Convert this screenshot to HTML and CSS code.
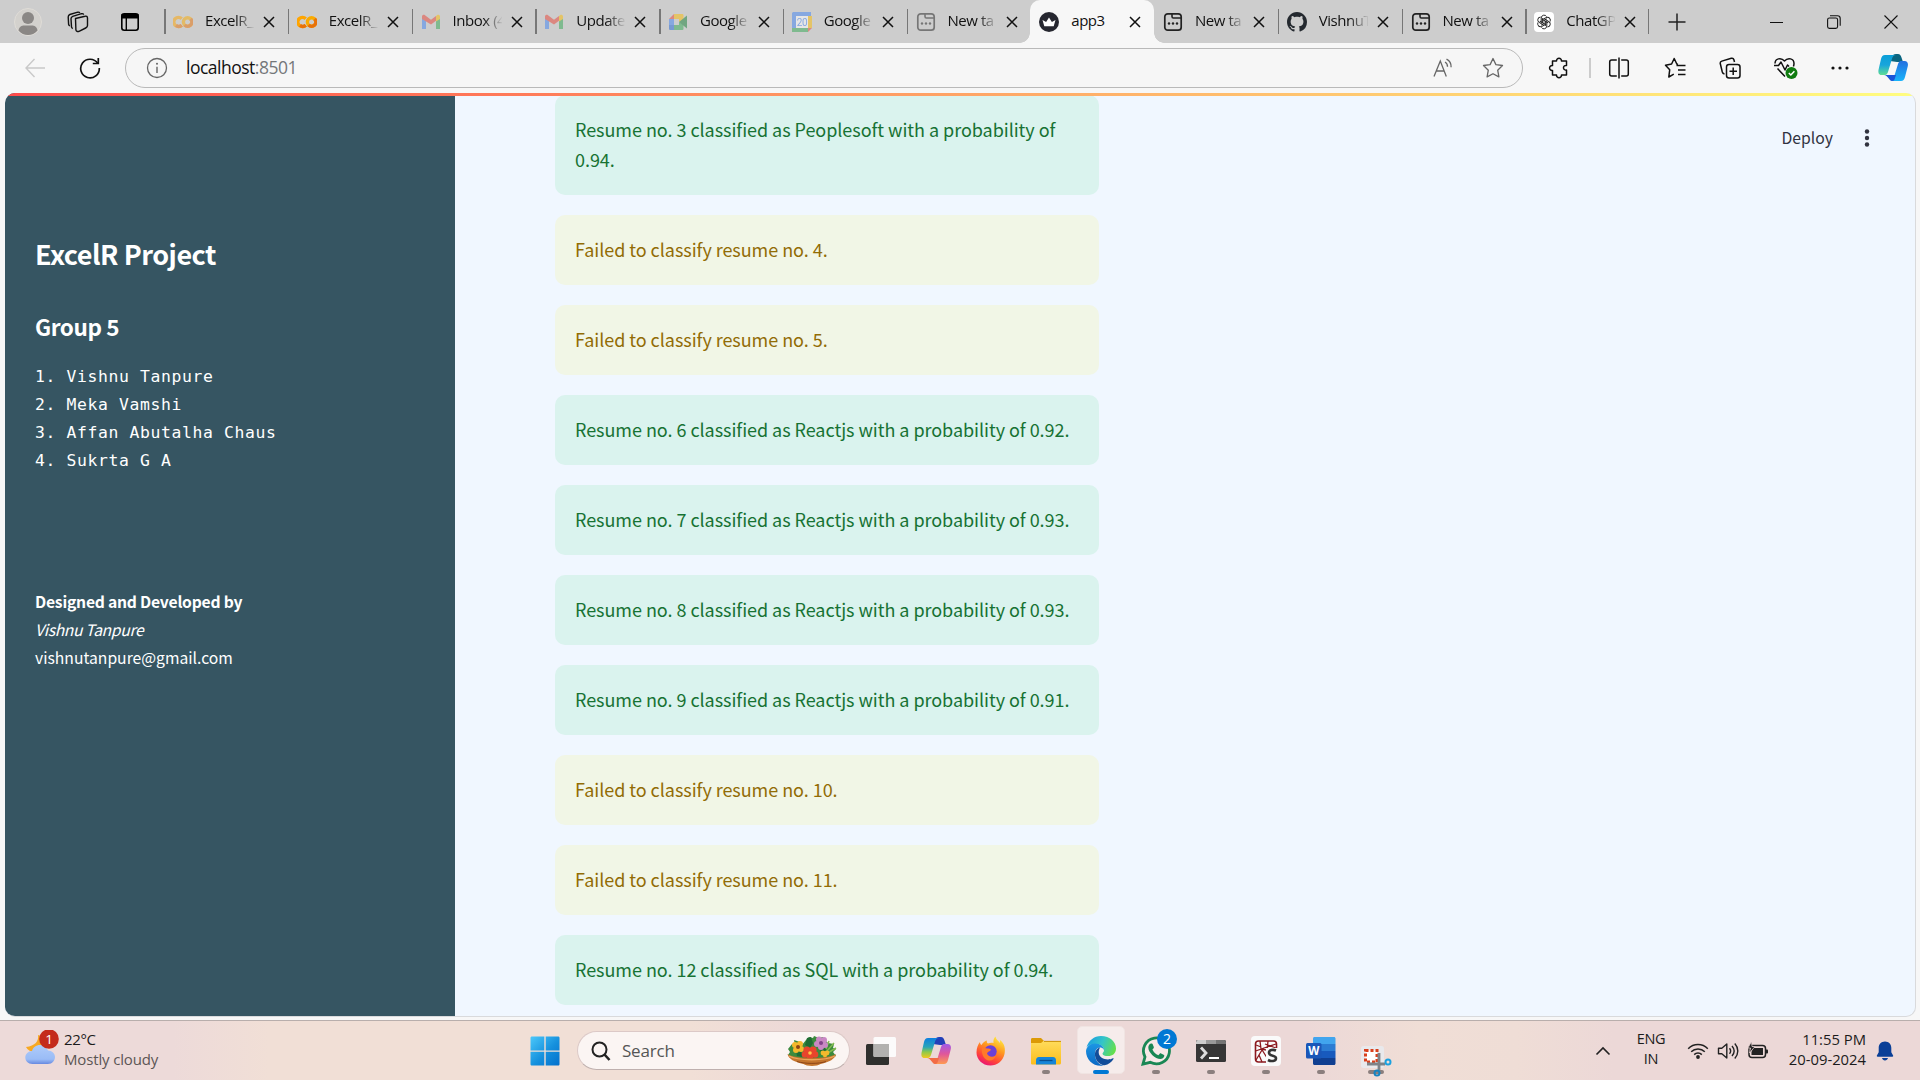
FILE: index.html
```html
<!DOCTYPE html>
<html lang="en">
<head>
<meta charset="utf-8">
<title>app3</title>
<link rel="stylesheet" href="styles.css">
</head>
<body>
<svg class="defs" aria-hidden="true">
  <defs>
    <linearGradient id="gWin" x1="0" y1="0" x2="1" y2="1"><stop offset="0" stop-color="#4cc8fa"/><stop offset=".55" stop-color="#1590dd"/><stop offset="1" stop-color="#0470cc"/></linearGradient>
    <linearGradient id="gCoA" x1="0" y1="0" x2="0" y2="1"><stop offset="0" stop-color="#0a9fd8"/><stop offset=".5" stop-color="#18a5dc"/><stop offset="1" stop-color="#5fdc94"/></linearGradient>
    <linearGradient id="gCoB" x1="0" y1="0" x2="0" y2="1"><stop offset="0" stop-color="#2470e0"/><stop offset="1" stop-color="#18b4fa"/></linearGradient>
    <linearGradient id="gCoC" x1="0" y1="0" x2="0" y2="1"><stop offset="0" stop-color="#0d7fe0"/><stop offset=".45" stop-color="#2aa5b8"/><stop offset=".7" stop-color="#8ec94a"/><stop offset="1" stop-color="#f2c81e"/></linearGradient>
    <linearGradient id="gCoD" x1="0" y1="0" x2="0" y2="1"><stop offset="0" stop-color="#a05be8"/><stop offset=".5" stop-color="#e0569a"/><stop offset="1" stop-color="#ff9a50"/></linearGradient>
    <linearGradient id="gFox" x1=".8" y1="0" x2=".3" y2="1"><stop offset="0" stop-color="#fff044"/><stop offset=".4" stop-color="#ff9a1f"/><stop offset=".75" stop-color="#ff4438"/><stop offset="1" stop-color="#e91277"/></linearGradient>
    <linearGradient id="gFold" x1="0" y1="0" x2="0" y2="1"><stop offset="0" stop-color="#ffdc5c"/><stop offset="1" stop-color="#fbbd1c"/></linearGradient>
    <linearGradient id="gEdgeT" x1="0" y1=".3" x2="1" y2=".6"><stop offset="0" stop-color="#1b9de2"/><stop offset=".5" stop-color="#34c5c8"/><stop offset="1" stop-color="#66e04a"/></linearGradient>
    <linearGradient id="gEdgeB" x1="0" y1="0" x2="0" y2="1"><stop offset="0" stop-color="#1c96e4"/><stop offset="1" stop-color="#0b68c4"/></linearGradient>
    <linearGradient id="gCloud" x1="0" y1="0" x2="0" y2="1"><stop offset="0" stop-color="#aecbfa"/><stop offset=".75" stop-color="#9abcf6"/><stop offset="1" stop-color="#6789e0"/></linearGradient>
    <symbol id="close" viewBox="0 0 12 12"><path d="M1 1l10 10M11 1L1 11" fill="none" stroke="#111" stroke-width="1.5"/></symbol>
    <symbol id="colab" viewBox="0 0 20 20"><g fill="none" stroke-width="3.4"><path d="M8.7 6.8A4.6 4.6 0 1 0 8.7 13.2" stroke="#ffa500"/><circle cx="14.6" cy="10" r="4.2" stroke="#f9ab00"/><path d="M3 13.4A4.6 4.6 0 0 0 8.8 13.2M11.6 13A4.2 4.2 0 0 0 17.6 7" stroke="#e8710a"/></g></symbol>
    <symbol id="gmail" viewBox="0 0 20 20"><path d="M1 4.5V17h4V8.5z" fill="#4285f4"/><path d="M19 4.5V17h-4V8.5z" fill="#34a853"/><path d="M1 7V4.5C1 3 2.8 2.300 4 3.200L10 7.700l5-3.800V8.700L10 12.500z" fill="#ea4335"/><path d="M15 4l1-.8c1.200-.9 3-.2 3 1.300V7l-4 2.500z" fill="#fbbc04"/></symbol>
    <symbol id="meet" viewBox="0 0 20 20"><path d="M1 7l5-5v5z" fill="#ea4335"/><path d="M6 2h8c1 0 1.500.5 1.500 1.500V9L11 10V7H6z" fill="#fbbc04"/><path d="M1 7h5v6H1z" fill="#4285f4"/><path d="M1 13h5v5H2.500C1.500 18 1 17.500 1 16.500z" fill="#2468d8"/><path d="M6 13h5v-3l4.500 2v4.500c0 1-.5 1.500-1.500 1.500H6z" fill="#34a853"/><path d="M11 10l8-6.500v13z" fill="#188038"/></symbol>
    <symbol id="calendar" viewBox="0 0 20 20"><path d="M1 0h18v5H0V1z" fill="#4285f4"/><path d="M0 4h4v12H0z" fill="#4285f4"/><path d="M16 4h4v12h-4z" fill="#fbbc04"/><path d="M0 16h16v4H0z" fill="#34a853"/><path d="M16 16h4l-4 4z" fill="#ea4335"/><path d="M4 4h12v12H4z" fill="#fff"/><text x="10" y="13.800" text-anchor="middle" font-family="Roboto, sans-serif" font-size="10" fill="#4285f4">20</text></symbol>
    <symbol id="newtab" viewBox="0 0 20 20"><rect x="1.800" y="1.800" width="16.400" height="16.400" rx="3" fill="none" stroke="#222" stroke-width="1.700"/><path d="M9 2v2.600C9 5.400 9.500 6 10.300 6H18" fill="none" stroke="#222" stroke-width="1.600"/><g fill="#222"><circle cx="6" cy="11.500" r="1.200"/><circle cx="10" cy="11.500" r="1.200"/><circle cx="14" cy="11.500" r="1.200"/></g></symbol>
    <symbol id="crown" viewBox="0 0 20 20"><circle cx="10" cy="10" r="10" fill="#262730"/><path d="M3.500 8l3.600 2L10 5.500l2.900 4.500L16.500 8l-1.800 6.200H5.300z" fill="#fff"/></symbol>
    <symbol id="github" viewBox="0 0 16 16"><path fill="#24292f" d="M8 0C3.580 0 0 3.580 0 8c0 3.540 2.290 6.530 5.470 7.590.4.070.55-.17.55-.38 0-.19-.01-.82-.01-1.490-2.010.37-2.530-.49-2.690-.94-.09-.23-.48-.94-.82-1.130-.28-.15-.68-.52-.01-.53.63-.01 1.080.58 1.230.82.72 1.210 1.870.87 2.330.66.07-.52.28-.87.51-1.070-1.780-.2-3.640-.89-3.640-3.950 0-.87.31-1.590.82-2.150-.08-.2-.36-1.020.08-2.120 0 0 .67-.21 2.200.82.64-.18 1.320-.27 2-.27s1.360.09 2 .27c1.530-1.040 2.200-.82 2.200-.82.44 1.100.16 1.920.08 2.120.51.56.82 1.270.82 2.150 0 3.070-1.870 3.750-3.650 3.950.29.25.54.73.54 1.480 0 1.070-.01 1.930-.01 2.200 0 .21.15.46.55.38A8.010 8.010 0 0 0 16 8c0-4.420-3.580-8-8-8z"/></symbol>
    <symbol id="gpt" viewBox="0 0 20 20"><rect width="20" height="20" rx="4" fill="#fff"/><g fill="none" stroke="#222" stroke-width=".95"><path id="petal" d="M7.200 10.800V6A2.900 2.900 0 0 1 12.600 4.600M8.700 9.200l4.200-2.400"/><use href="#petal" transform="rotate(60 10 10)"/><use href="#petal" transform="rotate(120 10 10)"/><use href="#petal" transform="rotate(180 10 10)"/><use href="#petal" transform="rotate(240 10 10)"/><use href="#petal" transform="rotate(300 10 10)"/></g></symbol>
  </defs>
</svg>

<header class="tabstrip">
  <div class="strip-tools">
    <svg class="avatar" width="28" height="28" viewBox="0 0 28 28"><circle cx="14" cy="14" r="13.500" fill="#d3d1cd" stroke="#dfdcd7"/><circle cx="14" cy="10" r="6" fill="#8a8785"/><path d="M4.500 22.500C5 18.500 8 17.500 10 17.500h8c2 0 5 1 5.500 5C21 25.500 17.500 27 14 27s-7-1.500-9.500-4.500z" fill="#8a8785"/></svg>
    <svg class="spaces" width="22" height="22" viewBox="0 0 22 22" fill="none" stroke="#111" stroke-width="1.400" stroke-linejoin="round"><path d="M8.500 7.500l9.500-2.300c1.500-.4 2.500.3 2.500 1.800v7.500c0 1.200-.7 2-1.800 2.500L12 20.300c-1.500.6-2.800 0-3.100-1.500z" /><path d="M5.800 17.500c-.8-.2-1.200-.8-1.300-1.500L4 7.700c0-1.200.6-2 1.700-2.400l8.800-2.600c1-.2 1.800.1 2.200.9"/><path d="M2.900 14.800c-.8-.2-1.200-.7-1.300-1.500L1.200 5.900c0-1.200.5-2 1.600-2.400l8-2.300c.9-.2 1.600 0 2 .8"/></svg>
    <svg class="vtabs" width="20" height="20" viewBox="0 0 20 20"><rect x="1.800" y="1.800" width="16.400" height="16.400" rx="2.500" fill="none" stroke="#000" stroke-width="1.600"/><path d="M1.500 2h17v4.500h-17z" fill="#000"/><path d="M6.300 6v12" stroke="#000" stroke-width="1.400"/></svg>
  </div>
  <nav class="tabs">
    <div class="tab asleep"><svg class="fav"><use href="#colab"/></svg><span>ExcelR_</span><svg class="x"><use href="#close"/></svg></div>
    <div class="tab"><svg class="fav"><use href="#colab"/></svg><span>ExcelR_</span><svg class="x"><use href="#close"/></svg></div>
    <div class="tab asleep"><svg class="fav"><use href="#gmail"/></svg><span>Inbox (4</span><svg class="x"><use href="#close"/></svg></div>
    <div class="tab asleep"><svg class="fav"><use href="#gmail"/></svg><span>Update</span><svg class="x"><use href="#close"/></svg></div>
    <div class="tab asleep"><svg class="fav"><use href="#meet"/></svg><span>Google</span><svg class="x"><use href="#close"/></svg></div>
    <div class="tab asleep"><svg class="fav"><use href="#calendar"/></svg><span>Google</span><svg class="x"><use href="#close"/></svg></div>
    <div class="tab asleep"><svg class="fav"><use href="#newtab"/></svg><span>New ta</span><svg class="x"><use href="#close"/></svg></div>
    <div class="tab active"><svg class="fav"><use href="#crown"/></svg><span>app3</span><svg class="x"><use href="#close"/></svg></div>
    <div class="tab noline"><svg class="fav"><use href="#newtab"/></svg><span>New ta</span><svg class="x"><use href="#close"/></svg></div>
    <div class="tab"><svg class="fav"><use href="#github"/></svg><span>VishnuT</span><svg class="x"><use href="#close"/></svg></div>
    <div class="tab"><svg class="fav"><use href="#newtab"/></svg><span>New ta</span><svg class="x"><use href="#close"/></svg></div>
    <div class="tab last"><svg class="fav"><use href="#gpt"/></svg><span>ChatGP</span><svg class="x"><use href="#close"/></svg></div>
  </nav>
  <svg class="plus" width="18" height="18" viewBox="0 0 18 18"><path d="M9 .5v17M.5 9h17" stroke="#222" stroke-width="1.500"/></svg>
  <div class="winctl">
    <svg width="14" height="14" viewBox="0 0 14 14"><path d="M0 7.500h13" stroke="#111"/></svg>
    <svg width="14" height="14" viewBox="0 0 14 14" fill="none" stroke="#111" stroke-width="1.100"><rect x=".6" y="3" width="10" height="10.400" rx="1.800"/><path d="M3 .8h7.500c1.700 0 2.700 1 2.700 2.700v7.200"/></svg>
    <svg width="14" height="14" viewBox="0 0 14 14"><path d="M.5.500l13 13M13.500.500l-13 13" stroke="#111" stroke-width="1.100"/></svg>
  </div>
</header>

<div class="toolbar">
  <svg class="back" width="20" height="20" viewBox="0 0 20 20" fill="none" stroke="#c9c9c9" stroke-width="1.400"><path d="M20 10H1M9.500 1L1 10l8.500 9"/></svg>
  <svg class="reload" width="22" height="22" viewBox="0 0 22 22" fill="none" stroke="#111" stroke-width="1.700"><path d="M18.700 6.300A9.300 9.300 0 1 0 20.300 11"/><path d="M19.300 1v5.500h-5.500"/></svg>
  <div class="address">
    <svg width="22" height="22" viewBox="0 0 22 22"><circle cx="11" cy="11" r="9.500" fill="none" stroke="#666" stroke-width="1.300"/><path d="M11 9.800V16" stroke="#666" stroke-width="1.400"/><circle cx="11" cy="6.800" r="1" fill="#666"/></svg>
    <p>localhost<em>:8501</em></p>
    <svg class="read" width="20" height="20" viewBox="0 0 20 20" fill="none" stroke="#666" stroke-width="1.300"><path d="M1 18.500L7.300 3l6 15.500M3.200 13h8.200M12 4c1.800 1 2.600 2.600 2.500 4.800M13.500 1.200c3.300 1.700 4.800 4.500 4.600 8"/></svg>
    <svg class="star" width="22" height="22" viewBox="0 0 22 22" fill="none" stroke="#666" stroke-width="1.300" stroke-linejoin="round"><path d="M11 1.500l2.900 6.100 6.600.9-4.800 4.700 1.200 6.700-5.900-3.200-5.900 3.200 1.200-6.700L1.500 8.500l6.600-.9z"/></svg>
  </div>
  <div class="actions">
    <svg width="22" height="22" viewBox="0 0 22 22" fill="none" stroke="#111" stroke-width="1.500" stroke-linejoin="round"><path d="M4.500 4h4c-.2-3.700 5.200-3.700 5 0h5v4.500c-4-.8-4 5.200 0 4.600V18h-5c.2 3.700-5.200 3.700-5 0h-4v-4.600C.6 13.800.6 8.200 4.500 8.600z"/></svg>
    <i></i>
    <svg class="a-split" width="22" height="22" viewBox="0 0 22 22" fill="none" stroke="#111" stroke-width="1.500"><path d="M8.800 3H3.700C2.500 3 1.700 3.800 1.700 5v12c0 1.200.8 2 2 2h5.100M13.200 3h5.100c1.200 0 2 .8 2 2v12c0 1.200-.8 2-2 2h-5.100M11 .5v21"/></svg>
    <svg class="a-fav" width="22" height="22" viewBox="0 0 22 22" fill="none" stroke="#111" stroke-width="1.500" stroke-linejoin="round"><path d="M14 7.300L12.800 7 10.200 1.500 7.600 7 1.500 8.200l4.200 4.600L4.800 20l5-2.800M12.500 8.500H21.500M14 13h7.500M14 17.500h7.500"/></svg>
    <svg class="a-coll" width="22" height="22" viewBox="0 0 22 22" fill="none" stroke="#111" stroke-width="1.500" stroke-linejoin="round"><rect x="7.500" y="7.500" width="13.500" height="13.500" rx="2.500"/><path d="M14.200 10.500v7.500M10.500 14.200H18M5.500 17c-1.200-.2-1.900-.9-2.200-2L1.300 6.800c-.3-1.300.2-2.300 1.500-2.700L12.300 1.300c1.300-.3 2.300.3 2.600 1.500l.6 2.200"/></svg>
    <svg class="a-heart" width="26" height="24" viewBox="0 0 26 24" fill="none" stroke="#111" stroke-width="1.500" stroke-linejoin="round"><path d="M12 20.500L4.500 12.500M2 7.500C2 2.500 8 1 11.500 5 15 1 21 2.500 21 7.500c0 1-.2 2-.6 3"/><path d="M1 9.500h4.500l2.500-3.500 4 8 2.500-5 1.500 1.500"/><circle cx="18.500" cy="17" r="6" fill="#107c10" stroke="none"/><path d="M15.800 17l2 2 3.600-3.700" stroke="#fff"/></svg>
    <svg class="a-dots" width="22" height="22" viewBox="0 0 22 22"><g fill="#111"><circle cx="4" cy="11" r="1.600"/><circle cx="11" cy="11" r="1.600"/><circle cx="18" cy="11" r="1.600"/></g></svg>
    <svg class="a-copilot" width="30" height="28" viewBox="0 0 30 28"><path d="M12 7l2-4c.7-1.800 1.700-3 4-3h2c2 0 2.800 1.400 3.400 3.200L25 8h-6z" fill="#0b6580"/><path d="M7 1h11c-2 0-3 1-3.800 3L10 18c-.8 2.600-2 3-4 3H3.500C.6 21 0 18.500.6 15.500L3 5c.7-2.600 1.700-4 4-4z" fill="url(#gCoA)"/><path d="M24 7h2.500c3 0 4 2.500 3.200 5.500L27 23c-.7 2.600-1.800 4-4 4H12c2 0 3-1 3.700-3L20 10c.8-2.500 2-3 4-3z" fill="url(#gCoB)"/><path d="M6 21c4 0 5 6 8 6 2 0 2.500-1 3-3l1-3z" fill="#1954d8"/></svg>
  </div>
</div>

<main class="frame">
  <div class="loading"></div>
  <aside class="sidebar">
    <h2>ExcelR Project</h2>
    <h3>Group 5</h3>
    <pre>1. Vishnu Tanpure
2. Meka Vamshi
3. Affan Abutalha Chaus
4. Sukrta G A</pre>
    <p class="credit"><strong>Designed and Developed by</strong><br><em>Vishnu Tanpure</em><br>vishnutanpure@gmail.com</p>
  </aside>
  <section class="results">
    <div class="alert ok">Resume no. 3 classified as Peoplesoft with a probability of<br>0.94.</div>
    <div class="alert warn">Failed to classify resume no. 4.</div>
    <div class="alert warn">Failed to classify resume no. 5.</div>
    <div class="alert ok">Resume no. 6 classified as Reactjs with a probability of 0.92.</div>
    <div class="alert ok">Resume no. 7 classified as Reactjs with a probability of 0.93.</div>
    <div class="alert ok">Resume no. 8 classified as Reactjs with a probability of 0.93.</div>
    <div class="alert ok">Resume no. 9 classified as Reactjs with a probability of 0.91.</div>
    <div class="alert warn">Failed to classify resume no. 10.</div>
    <div class="alert warn">Failed to classify resume no. 11.</div>
    <div class="alert ok">Resume no. 12 classified as SQL with a probability of 0.94.</div>
  </section>
  <div class="appmenu">
    <span>Deploy</span>
    <svg width="6" height="18" viewBox="0 0 6 18" fill="#31333f"><circle cx="3" cy="2.500" r="2.200"/><circle cx="3" cy="9" r="2.200"/><circle cx="3" cy="15.500" r="2.200"/></svg>
  </div>
</main>

<footer class="taskbar">
  <div class="weather">
    <svg width="36" height="38" viewBox="0 0 36 38"><path d="M13 5c1 6-3 11-12 12 2 4 7 6 12 4 6-2 8-9 6-14z" fill="#f7a823"/><path d="M7.500 34C3 34 .3 31 .3 27.500s3-6.500 6.700-6.500C8 17.500 11 15 15 15s7 2.500 8 5.500c4 0 7 3 7 6.500s-2.700 7-7.200 7z" fill="url(#gCloud)"/><circle cx="24" cy="9" r="9.800" fill="#c42b1c"/><text x="24" y="14" text-anchor="middle" font-family="Open Sans, sans-serif" font-size="13.500" fill="#fff">1</text></svg>
    <p>22°C<br><small>Mostly cloudy</small></p>
  </div>
  <div class="app win"><svg width="30" height="30" viewBox="0 0 30 30"><path d="M2 .5h12.300v14H.5V2C.5 1 1 .5 2 .5zM15.700.500H28c1 0 1.500.5 1.500 1.500v12.500H15.700zM.5 15.800h13.800v13.700H2c-1 0-1.500-.5-1.500-1.500zM15.700 15.800h13.800V28c0 1-.5 1.500-1.500 1.500H15.700z" fill="url(#gWin)"/></svg></div>
  <div class="search">
    <svg width="20" height="20" viewBox="0 0 20 20" fill="none" stroke="#222" stroke-width="2"><circle cx="8.500" cy="8.500" r="7"/><path d="M13.500 13.500l5 5.500" stroke-width="2.600"/></svg>
    <span>Search</span>
    <svg width="50" height="32" viewBox="0 0 50 32"><path d="M1 14l4-5 3 1-1-5 6 2 2 3 4-5 3-3 4 1 1-2 5 2 4-1 3 4 2 2 6 1-1 4 3 1-3 3 3 4-8 4H9l-8-5 2-3z" fill="#3c8a3e"/><path d="M20 3l4-1 2 6-3 5-5-3zM9 16l5 1 2 5-6-1zM36 10l4 3-3 5-4-2z" fill="#1f6d35"/><path d="M42 6l-3 8M47 8l-7 8M49 13l-10 6" stroke="#82bb4e" stroke-width="1.500"/><g fill="#f4b92d"><circle cx="8" cy="10" r="3"/><circle cx="13" cy="9" r="3"/><circle cx="9" cy="15" r="3"/><circle cx="14" cy="14" r="3"/><circle cx="36" cy="18" r="2.400"/><circle cx="40" cy="18" r="2.400"/><circle cx="38" cy="20.500" r="2"/></g><circle cx="11" cy="12" r="2" fill="#8c4514"/><g fill="#c988c4"><circle cx="32" cy="4.500" r="3"/><circle cx="37" cy="5" r="3"/><circle cx="30" cy="9" r="3"/><circle cx="38" cy="10" r="3"/><circle cx="34" cy="12" r="3"/></g><circle cx="34" cy="8" r="2" fill="#84408c"/><g fill="#e8452c"><circle cx="20" cy="15" r="3.600"/><circle cx="26" cy="15" r="3.600"/><circle cx="18" cy="19.500" r="3.300"/><circle cx="28" cy="19.500" r="3.300"/><circle cx="23" cy="21" r="3.500"/></g><circle cx="23" cy="18" r="1.800" fill="#ffc64a"/><path d="M.500 19c7 5.500 41 5.500 48.500 0-1 5-6.500 8-15.500 10-3 2.600-14 2.600-17 0C7.500 27 1.500 24 .5 19z" fill="#c4752e"/><path d="M2 21c9 5 36 5 46 0" fill="none" stroke="#eba65d" stroke-width="1.300"/><path d="M10 26.500c8 2.500 22 2.500 29 0" fill="none" stroke="#8d4517"/></svg>
  </div>
  <div class="app"><svg width="30" height="30" viewBox="0 0 30 30"><rect y="8" width="23" height="21" rx="1.500" fill="#2f2f2d"/><rect x="7.500" y="1" width="22.500" height="20" rx="1.500" fill="#fdfdfd" fill-opacity=".95"/><path d="M7.500 8H23v13H9c-1 0-1.500-.5-1.500-1.500z" fill="#b2b1af"/></svg></div>
  <div class="app"><svg width="30" height="28" viewBox="0 0 30 28"><path d="M12 7l2-4c.7-1.800 1.700-3 4-3h2c2 0 2.800 1.400 3.400 3.200L25 8h-6z" fill="#2340b8"/><path d="M7 1h11c-2 0-3 1-3.800 3L10 18c-.8 2.600-2 3-4 3H3.500C.6 21 0 18.500.6 15.500L3 5c.7-2.600 1.700-4 4-4z" fill="url(#gCoC)"/><path d="M24 7h2.500c3 0 4 2.500 3.200 5.500L27 23c-.7 2.600-1.800 4-4 4H12c2 0 3-1 3.700-3L20 10c.8-2.500 2-3 4-3z" fill="url(#gCoD)"/><path d="M6 21c4 0 5 6 8 6 2 0 2.500-1 3-3l1-3z" fill="#f26b45"/></svg></div>
  <div class="app"><svg width="30" height="30" viewBox="0 0 30 30"><path d="M4 6c0 1.500.5 2.500 1.500 3C7 6.500 9 5 11 4.500 10.500 6 11 7 12 7.500c2-1 4-1 5.500-.5C17 4 18 2 19.500.5c.5 3 2.500 4 4.500 6.500 0-1 .2-2 0-3 5 4 5.500 9 4.500 14C27 25 21 29.500 14.500 29.500 6 29.500.5 23 .5 16.500.5 12 2 8.500 4 6z" fill="url(#gFox)"/><circle cx="14.500" cy="15.500" r="6.200" fill="#6b40d8"/><path d="M6 12c2.500-1 4 .5 6.500.5 1.500 0 3 .8 2 2-1.500 1.500-3 1-3.500 3 1 3 5 4.500 9 2-1 4-4 5.500-7.500 5C8 23.500 5 18 6 12z" fill="#ff7a2a"/></svg></div>
  <div class="app run"><svg width="30" height="28" viewBox="0 0 30 28"><path d="M0 2.500C0 1.500.6 1 1.500 1H10l3 3-3 4H0z" fill="#dc9a06"/><path d="M10 6l2.500-2H29c.6 0 1 .4 1 1v21c0 .9-.6 1.500-1.500 1.500h-27C.6 27.500 0 27 0 26V6z" fill="url(#gFold)"/><path d="M13 4.400h17" stroke="#cc920a"/><path d="M5 27.500v-4c0-2 1-3.500 3-3.500h14c2 0 3 1.500 3 3.500v4z" fill="#1685d8"/><path d="M8.500 23.500h13" stroke="#084f92" stroke-width="1.300"/></svg></div>
  <div class="app run current"><svg width="30" height="30" viewBox="0 0 30 30"><path d="M.5 11.500C2.500 4.500 8 0 15 0c9 0 15 6 15 12.500 0 5-3.500 7.500-8 7.500-3 0-5.500-.9-5.500-2.300 0-.8 1.500-1.500 1.500-3.700 0-3-3-6-8.500-6C5 8 2 9.500.5 11.500z" fill="url(#gEdgeT)"/><path d="M0 15C.5 10.500 4 7.500 9 7.500c5.500 0 9 3 9 6.500 0 0-1-2.500-4-2.500-3.500 0-5.500 4-5 8 .5 5 4 9.500 9 10C8 31.500 0 24 0 15z" fill="url(#gEdgeB)"/><path d="M14 11.500c-3 .5-5.500 4-5 8 .5 5 4.500 9.500 9.500 9.700 4-.7 7-3 9-6.200.4-.8-.2-1-.7-.7C22 25 13 23 12.700 16.500c0-2 .5-3.500 1.300-5z" fill="#124d9a"/></svg></div>
  <div class="app run"><svg width="30" height="30" viewBox="0 0 30 30"><path d="M2 28l2-7A13 13 0 1 1 9.300 26.300z" fill="#f7e9e7" stroke="#1a8754" stroke-width="2.800"/><path d="M10.500 7.500c.7 0 1 .2 1.300 1l1 2.500c.2.7 0 1-.4 1.500l-1 1c1.500 3 3 4.500 6 5.700l1.300-1.500c.4-.5.8-.5 1.400-.3l2.500 1.300c.6.300.8.700.7 1.300-.5 2-2 3-4 3-5 0-12-6.500-12-11.500 0-2 1.300-4 3.200-4z" fill="#1a8754"/></svg><b>2</b></div>
  <div class="app run"><svg width="30" height="22" viewBox="0 0 30 22"><rect width="30" height="22" rx="1.500" fill="#363636"/><path d="M1.500 0H10v4H0V1.500z" fill="#ccc"/><path d="M10 0h10v4H10z" fill="#999"/><path d="M20 0h8.500L30 1.500V4H20z" fill="#747474"/><path d="M5 7.500l5 5.500-5 5.500" fill="none" stroke="#ddd" stroke-width="2.800"/><path d="M13 18h10" stroke="#fff" stroke-width="2"/></svg></div>
  <div class="app run"><svg width="30" height="30" viewBox="0 0 30 30"><rect width="30" height="30" rx="4" fill="#fafafa"/><rect x="4.500" y="5" width="21" height="21" rx="3" fill="none" stroke="#8c1a1f" stroke-width="1.600"/><path d="M9 5l1 8 15-5M17 5l-1 10M4.500 15l6-2 5 8M5 24l6-10M10 13l15 3M11 26l-3-7M14 8l11 4M5 9l5 2" fill="none" stroke="#8c1a1f" stroke-width="1.300"/><path d="M15 12h12v15H15z" fill="#fafafa"/><path d="M25 14.500c-3-1.300-7-.6-7 2.200 0 4 7 2 7 5.500 0 3.300-5 3.500-8 1.800" fill="none" stroke="#333" stroke-width="2.600"/></svg></div>
  <div class="app run"><svg width="30" height="30" viewBox="0 0 30 30"><path d="M8.500 1H28c.9 0 1.500.6 1.500 1.500V8H7V2.500C7 1.600 7.600 1 8.500 1z" fill="#41a5ee"/><path d="M7 8h22.500v7H7z" fill="#2b7cd3"/><path d="M7 15h22.500v7H7z" fill="#185abd"/><path d="M7 22h22.500v5.500c0 .9-.6 1.500-1.500 1.500H8.500C7.600 29 7 28.400 7 27.500z" fill="#103f91"/><rect y="7" width="15.500" height="15.500" rx="1.500" fill="#1a57b8"/><text x="7.700" y="19" text-anchor="middle" font-family="Open Sans, sans-serif" font-weight="700" font-size="11.500" fill="#fff">W</text></svg></div>
  <div class="app run snip"><svg width="32" height="32" viewBox="0 0 32 32"><rect x="0" y="1" width="23" height="22" rx="2.500" fill="#e9e9ec"/><rect x="4.500" y="5.500" width="11.500" height="11.500" fill="#fff" stroke="#d9401c" stroke-width="3" stroke-dasharray="3 2"/><path d="M18 8v18M6 19h18" stroke="#7e8388" stroke-width="2.800"/><circle cx="27" cy="17" r="2.500" fill="none" stroke="#1ba1e0" stroke-width="2"/><circle cx="16" cy="28" r="2.500" fill="none" stroke="#1583c0" stroke-width="2"/></svg></div>
  <div class="tray">
    <svg class="chev" width="16" height="10" viewBox="0 0 16 10"><path d="M1.500 8.500L8 2l6.500 6.500" fill="none" stroke="#222" stroke-width="1.600"/></svg>
    <p class="lang">ENG<br>IN</p>
    <div class="status">
      <svg width="22" height="18" viewBox="0 0 22 18" fill="none" stroke="#222" stroke-width="1.500"><path d="M1.200 6.700a13.800 13.800 0 0 1 19.600 0M4.200 9.700a9.600 9.600 0 0 1 13.600 0M7.200 12.600a5.400 5.400 0 0 1 7.600 0"/><circle cx="11" cy="15" r="1.900" fill="#222" stroke="none"/></svg>
      <svg width="22" height="18" viewBox="0 0 22 18" fill="none" stroke="#222" stroke-width="1.400" stroke-linejoin="round"><path d="M1.500 6.200h3.300L9.800 2v14l-5-4.200H1.500zM12.500 6.200c1.400 1.700 1.400 3.900 0 5.600M15 4c2.600 3 2.600 7 0 10M17.800 1.500c4 4.500 4 10.500 0 15"/></svg>
      <svg width="22" height="18" viewBox="0 0 22 18"><rect x="2" y="3.500" width="16.500" height="12" rx="3" fill="none" stroke="#222" stroke-width="1.500"/><path d="M6 6h10v7H4.500v-3z" fill="#222"/><path d="M19 7.500h1.200c.5 0 .8.400.8.800v2.400c0 .4-.3.800-.8.800H19z" fill="#222"/><path d="M4.500-.5L1 6h2.500l-1 5L8 4.500H5z" fill="#222" stroke="#ecd9d8" stroke-width=".7"/></svg>
    </div>
    <p class="clock">11:55 PM<br>20-09-2024</p>
    <svg class="bell" width="18" height="20" viewBox="0 0 18 20" fill="#0a3f97"><path d="M9 .5c3.800 0 6.300 2.800 6.300 6.300v4.400l1.800 3.300c.3.700 0 1.200-.7 1.200H1.600c-.7 0-1-.5-.7-1.200l1.800-3.300V6.800C2.700 3.300 5.200.5 9 .5zM6 17h6c-.4 1.600-1.500 2.500-3 2.500S6.400 18.600 6 17z"/></svg>
  </div>
</footer>
</body>
</html>
```
FILE: styles.css
```css
* { box-sizing: border-box; }
body, h2, h3, p, pre { margin: 0; }
body {
  width: 1920px;
  height: 1080px;
  overflow: hidden;
  display: flex;
  flex-direction: column;
  background: #f7f7f7;
  font-family: "Open Sans", "Noto Sans", sans-serif;
}
svg { display: block; flex: none; }
.defs { position: absolute; width: 0; height: 0; }

/* Tab strip */
.tabstrip { display: flex; align-items: center; height: 43px; background: #cdcdcd; flex: none; }
.strip-tools { display: flex; align-items: center; width: 164px; padding-left: 14px; flex: none; }
.spaces { margin-left: 25px; }
.vtabs { margin-left: 31px; }
.tabs { display: flex; height: 43px; flex: none; }
.tab {
  position: relative;
  display: flex;
  align-items: center;
  width: 123.750px;
  padding-left: 9px;
  font-size: 15px;
  letter-spacing: -.45px;
  color: #111;
}
.tab::before { content: ""; position: absolute; left: 0; top: 9px; width: 1.500px; height: 25px; background: #777; }
.tab.last::after { content: ""; position: absolute; right: 0; top: 9px; width: 1.500px; height: 25px; background: #777; }
.fav { width: 20px; height: 20px; margin-right: 12px; }
.asleep .fav { opacity: .5; }
.tab span {
  width: 49px;
  line-height: 24px;
  padding-bottom: 3px;
  white-space: nowrap;
  -webkit-mask-image: linear-gradient(90deg, #000 62%, transparent 102%);
  mask-image: linear-gradient(90deg, #000 62%, transparent 102%);
}
.x { width: 12px; height: 12px; margin-left: 9px; }
.active { background: #f7f7f7; border-radius: 10px 10px 0 0; }
.active span { -webkit-mask-image: none; mask-image: none; }
.tab.active::before, .tab.active::after {
  content: "";
  position: absolute;
  top: auto;
  bottom: 0;
  width: 10px;
  height: 10px;
  background: radial-gradient(circle at 0 0, transparent 9.500px, #f7f7f7 10px);
}
.tab.active::before { left: -10px; }
.tab.active::after { right: -10px; background: radial-gradient(circle at 100% 0, transparent 9.500px, #f7f7f7 10px); }
.tab.noline::before { display: none; }
.plus { margin-left: 19px; }
.winctl { display: flex; gap: 43px; margin-left: auto; padding-right: 22px; }

/* Toolbar */
.toolbar { display: flex; align-items: center; height: 50px; flex: none; }
.back { margin-left: 25px; }
.reload { margin-left: 34px; }
.address {
  display: flex;
  align-items: center;
  width: 1398px;
  height: 40px;
  margin-left: 24px;
  padding-left: 20px;
  border: 1px solid #b9b9b9;
  border-radius: 20px;
  background: #f6f6f6;
  flex: none;
}
.address p { margin-left: 18px; padding-bottom: 2px; font-size: 17.500px; letter-spacing: -.5px; line-height: 24px; color: #111; }
.address em { font-style: normal; color: #74777a; }
.read { margin-left: auto; }
.star { margin: 0 18px 0 29px; }
.actions { display: flex; align-items: center; margin-left: 25px; }
.actions i { width: 2px; height: 20px; margin: 0 17px 0 19px; background: #ccc; }
.a-fav { margin-left: 34px; }
.a-coll { margin-left: 33px; }
.a-heart { margin-left: 32px; }
.a-dots { margin-left: 30px; }
.a-copilot { margin-left: 27px; }

/* Streamlit page */
.frame {
  position: relative;
  display: flex;
  width: 1911px;
  height: 924px;
  margin-left: 5px;
  flex: none;
  overflow: hidden;
  border-radius: 10px;
  border: solid #d9dadc;
  border-width: 0 1px 1px 0;
  background: #f0f7ff;
  font-family: "Noto Sans CJK SC", "Noto Sans", sans-serif;
}
.loading { position: absolute; inset: 0 0 auto; height: 3px; background: linear-gradient(90deg, #ff4b4b, #fffd80); }
.sidebar { width: 450px; padding: 139px 30px 0; background: #365562; color: #fff; flex: none; }
.sidebar h2 { font-size: 27px; font-weight: 600; line-height: 44px; letter-spacing: -.47px; }
.sidebar h3 { margin-top: 31px; font-size: 22.500px; font-weight: 600; line-height: 38px; letter-spacing: -.4px; }
.sidebar pre { margin-top: 18px; font-family: "DejaVu Sans Mono", monospace; font-size: 16.400px; letter-spacing: .63px; line-height: 28px; }
.credit { margin-top: 113px; font-size: 15.700px; line-height: 28px; }
.credit strong { letter-spacing: -.23px; }
.credit em { letter-spacing: -.35px; }
.results { display: flex; flex-direction: column; gap: 20px; width: 544px; margin: 2px 0 0 100px; flex: none; }
.alert { padding: 19px 20px 21px; border-radius: 10px; font-size: 18px; letter-spacing: -.045px; line-height: 30px; white-space: nowrap; }
.ok { background: #daf3ee; color: #177233; }
.warn { background: #f1f6e6; color: #926c05; }
.appmenu { display: flex; align-items: center; gap: 31px; height: 30px; margin: 30px 45px 0 auto; font-size: 15.750px; color: #31333f; }
.appmenu span { padding-bottom: 1px; }

/* Taskbar */
.taskbar {
  display: flex;
  align-items: center;
  height: 60px;
  margin-top: 3px;
  flex: none;
  border-top: 1px solid #b8aeac;
  background: linear-gradient(90deg, #eddad9, #eddad9 9%, #f1dfd6 14%, #f1dfd6 36%, #ecd8d7 42%, #ecd8d7 68%, #f0ded6 74%, #efddd6 79%, #ecd8d7 84%, #ecd8d7);
  color: #1b1b1b;
}
.weather { display: flex; align-items: center; width: 517px; padding-left: 25px; flex: none; }
.weather svg { margin-top: -3px; }
.weather p { margin-left: 3px; padding-bottom: 3px; font-size: 15px; line-height: 20px; letter-spacing: -.35px; }
.weather small { font-size: 15px; letter-spacing: -.15px; color: #5c5655; }
.app { position: relative; display: flex; align-items: center; justify-content: center; width: 55px; height: 59px; flex: none; }
.search {
  display: flex;
  align-items: center;
  width: 273px;
  height: 39px;
  margin: 0 3px 0 5px;
  padding: 0 12px 0 13px;
  border: 1px solid #dcc9c7;
  border-bottom-color: #bfb0ae;
  border-radius: 20px;
  background: #fbf5f3;
  flex: none;
}
.search span { margin: 0 auto 0 11px; font-size: 17px; letter-spacing: -.2px; color: #555; }
.run::after { content: ""; position: absolute; left: 24px; bottom: 6px; width: 8px; height: 4px; border-radius: 2px; background: #8b7f7e; }
.current::before { content: ""; position: absolute; inset: 5px 3px 6px 4px; border: 1px solid #f0e4e2; border-radius: 5px; background: #f6eceb; }
.current svg { position: relative; }
.current::after { left: 20px; width: 16px; background: #0078d4; }
.app b { position: absolute; left: 29px; top: 8px; width: 20px; height: 20px; border-radius: 50%; background: #0078d4; color: #fff; font-weight: 400; font-size: 14px; line-height: 20px; text-align: center; }
.snip svg { position: relative; top: 10px; left: 1px; z-index: 1; }
.snip::after { left: 20px; width: 16px; }
.tray { display: flex; align-items: center; margin-left: auto; padding-right: 26px; font-size: 14.800px; line-height: 20px; }
.tray p { padding-bottom: 3px; }
.lang { width: 80px; text-align: center; font-size: 14.500px; letter-spacing: -.3px; }
.status { display: flex; gap: 8px; margin-left: -4px; }
.clock { width: 97px; text-align: right; }
.bell { margin-left: 10px; }
```
